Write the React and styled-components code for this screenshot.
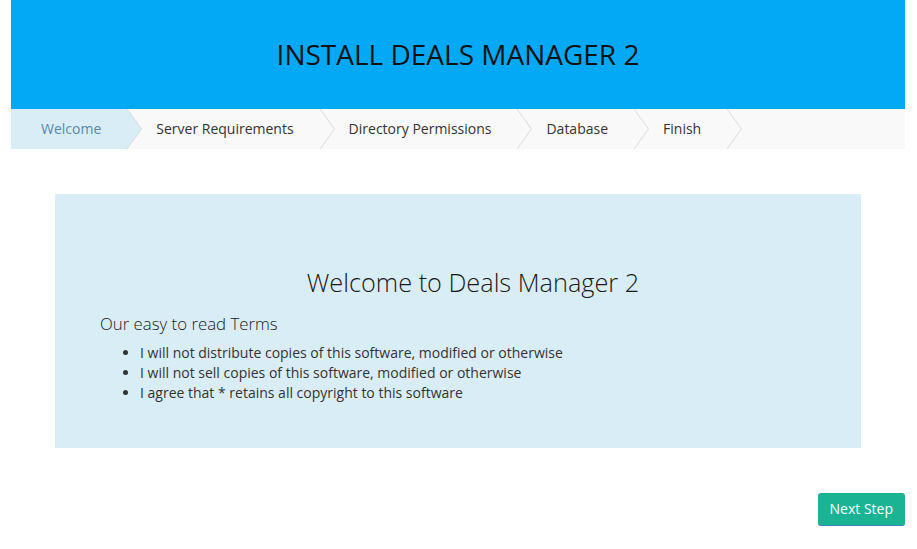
import React from "react";
import styled, { createGlobalStyle } from "styled-components";

const Global = createGlobalStyle`
  html, body { margin: 0; padding: 0; background: #fff; }
  body { font-family: "Open Sans", "Liberation Sans", sans-serif; color: #333; }
`;

const Page = styled.div`
  width: 894px;
  margin-left: 11px;
`;

const Header = styled.header`
  height: 109px;
  background: #03a9f4;
  display: flex;
  align-items: center;
  justify-content: center;
`;

const Title = styled.h1`
  margin: 0;
  padding-bottom: 1px;
  font-size: 28px;
  font-weight: 400;
  color: #111;
`;

const Steps = styled.ol`
  list-style: none;
  margin: 0;
  padding: 0;
  height: 40px;
  background: #f9f9f9;
  display: flex;
`;

const Step = styled.li`
  display: flex;
  height: 40px;
`;

const StepLabel = styled.span`
  display: flex;
  align-items: center;
  box-sizing: border-box;
  padding: 0 26px 2px ${(p) => (p.$first ? 30 : 14)}px;
  font-size: 14px;
  color: ${(p) => (p.$active ? "#5a88ab" : "#333")};
  background: ${(p) => (p.$active ? "#d9edf7" : "transparent")};
`;

const Chevron = ({ active }) => (
  <svg width="15" height="40" viewBox="0 0 15 40" style={{ display: "block" }}>
    {active && <polygon points="0,0 15,20 0,40" fill="#d9edf7" />}
    <polyline points="0,0 14.5,20 0,40" fill="none" stroke="#dcdcdc" strokeWidth="1" />
  </svg>
);

const Main = styled.main`
  padding: 45px 44px 0 44px;
  display: flex;
  flex-direction: column;
`;

const Panel = styled.section`
  background: #d9edf7;
  height: 254px;
  box-sizing: border-box;
  padding: 70px 15px 0 45px;
`;

const PanelTitle = styled.h2`
  margin: 0 0 13px;
  text-align: center;
  font-size: 25.3px;
  line-height: 36px;
  font-weight: 300;
  color: #1a1a1a;
`;

const Lead = styled.p`
  margin: 0 0 8px;
  font-size: 16.8px;
  line-height: 22px;
  font-weight: 300;
  color: #1a1a1a;
`;

const Terms = styled.ul`
  margin: 0;
  padding-left: 40px;
`;

const Term = styled.li`
  font-size: 14px;
  line-height: 20px;
  color: #333;
`;

const Footer = styled.div`
  display: flex;
  justify-content: flex-end;
  padding-top: 45px;
`;

const Button = styled.button`
  font-family: inherit;
  font-size: 14px;
  color: #fff;
  background: #1ab394;
  border: none;
  border-bottom: 1px solid #3a86b8;
  border-radius: 3px;
  height: 33px;
  padding: 0 12px 2px;
  cursor: pointer;
`;

const steps = ["Welcome", "Server Requirements", "Directory Permissions", "Database", "Finish"];

export default function App() {
  return (
    <>
      <Global />
      <Page>
        <Header>
          <Title>INSTALL DEALS MANAGER 2</Title>
        </Header>
        <Steps>
          {steps.map((s, i) => (
            <Step key={s}>
              <StepLabel $first={i === 0} $active={i === 0}>{s}</StepLabel>
              <Chevron active={i === 0} />
            </Step>
          ))}
        </Steps>
        <Main>
          <Panel>
            <PanelTitle>Welcome to Deals Manager 2</PanelTitle>
            <Lead>Our easy to read Terms</Lead>
            <Terms>
              <Term>I will not distribute copies of this software, modified or otherwise</Term>
              <Term>I will not sell copies of this software, modified or otherwise</Term>
              <Term>I agree that * retains all copyright to this software</Term>
            </Terms>
          </Panel>
        </Main>
        <Footer>
          <Button>Next Step</Button>
        </Footer>
      </Page>
    </>
  );
}
